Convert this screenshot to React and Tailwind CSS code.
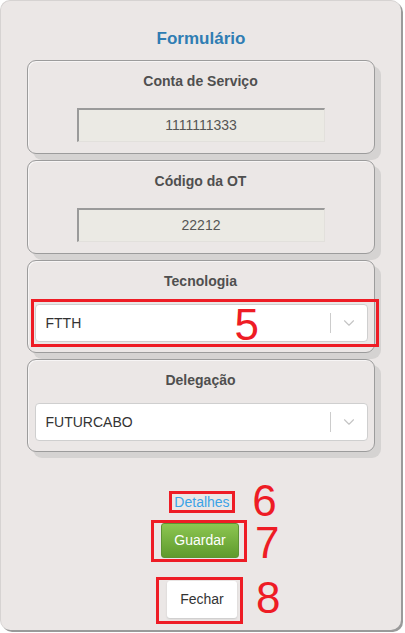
import { ChevronDown } from "lucide-react";

const font = { fontFamily: '"Liberation Sans", Arial, sans-serif' };

function Card({ title, children, bottom = "pb-[11px]" }) {
  return (
    <div
      className={`w-[348px] rounded-[9px] border border-[#9c9c9c] bg-[#ebe7e6] pt-[10px] ${bottom} shadow-[6px_6px_0_#d5d3d2,inset_1px_1px_0_#f7f5f5]`}
    >
      <div className="h-5 text-center text-[14px] font-bold leading-5 text-[#4f4f4f]">{title}</div>
      {children}
    </div>
  );
}

function ReadOnlyInput({ value }) {
  return (
    <div className="mx-auto mt-[17px] flex h-[34px] w-[248px] items-center justify-center border-t-2 border-l-2 border-r border-b border-t-[#9a9a9a] border-l-[#9a9a9a] border-r-[#e2e0dc] border-b-[#e2e0dc] bg-[#ebeae4] text-[14px] text-[#555]">
      {value}
    </div>
  );
}

function Select({ value }) {
  return (
    <div className="flex h-[38px] w-[333px] items-center rounded-[4px] border border-[#cfcfcf] bg-white">
      <span className="flex-1 pl-[10px] text-[14px] leading-5 text-[#333]">{value}</span>
      <span className="h-5 w-px bg-[#cccccc]" />
      <span className="flex w-[36px] justify-center text-[#c4c4c4]">
        <ChevronDown size={18} strokeWidth={1.5} />
      </span>
    </div>
  );
}

function Mark({ n, className }) {
  return (
    <span className={`absolute text-[44px] leading-none text-[#ee1c25] ${className}`}>{n}</span>
  );
}

export default function App() {
  return (
    <div style={font} className="h-[633px] w-[405px] bg-white">
      <div className="flex h-[630px] w-[401px] flex-col items-center rounded-[10px] border-l border-t border-[#d6d3d2] bg-[#ebe7e6] shadow-[2px_2px_0_#9a9a9a]">
        <h1 className="mt-[28px] h-5 text-[17px] font-bold leading-5 text-[#2f7db3]">Formulário</h1>

        <div className="mt-[11px] flex flex-col gap-[6px] pr-[1px]">
          <Card title="Conta de Serviço">
            <ReadOnlyInput value="1111111333" />
          </Card>
          <Card title="Código da OT">
            <ReadOnlyInput value="22212" />
          </Card>
          <Card title="Tecnologia" bottom="pb-[10px]">
            <div className="relative mt-[13px] ml-[7px]">
              <Select value="FTTH" />
              <div className="absolute -top-[5px] -bottom-[5px] -left-[4px] -right-[5px] border-[3px] border-[#ee1c25]" />
              <Mark n="5" className="left-[200px] -top-[1px]" />
            </div>
          </Card>
          <Card title="Delegação" bottom="pb-[10px]">
            <div className="mt-[13px] ml-[7px]">
              <Select value="FUTURCABO" />
            </div>
          </Card>
        </div>

        <div className="relative mt-[39px] ml-[2px]">
          <div className="border-[3px] border-[#ee1c25] px-[2px] text-[14px] leading-4">
            <a className="text-[#3ba3e6]">Detalhes</a>
          </div>
          <Mark n="6" className="left-[83px] -top-[12px]" />
        </div>

        <div className="relative mt-[7px] -ml-[4px]">
          <div className="border-[3px] border-[#ee1c25] pl-[7px] pr-[5px] pt-0 pb-[1px]">
            <button className="h-[35px] w-[78px] rounded-[3px] border border-[#5d9433] bg-gradient-to-b from-[#8dc651] to-[#5f9b2d] text-[14px] text-white">
              Guardar
            </button>
          </div>
          <Mark n="7" className="left-[104px] top-[1px]" />
        </div>

        <div className="relative mt-[15px] -ml-[3px]">
          <div className="border-[3px] border-[#ee1c25] pl-[8px] pr-[3px] pt-[1px] pb-[3px]">
            <button className="h-[37px] w-[70px] rounded-[3px] bg-white text-[14px] text-[#333] shadow-[0_1px_2px_#c8c8c8]">
              Fechar
            </button>
          </div>
          <Mark n="8" className="left-[100px] -top-[1px]" />
        </div>
      </div>
    </div>
  );
}
